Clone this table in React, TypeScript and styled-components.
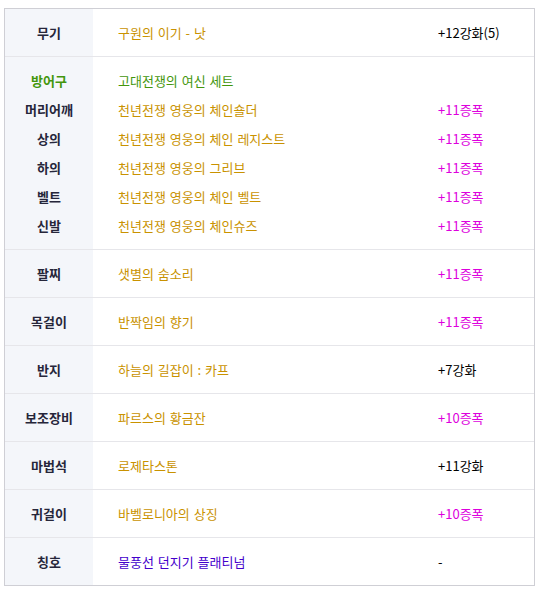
import React from "react";
import styled, { createGlobalStyle } from "styled-components";

const GlobalStyle = createGlobalStyle`
  body {
    margin: 8px 0 0 4px;
    background: #fff;
    font-family: "Noto Sans CJK KR", "Noto Sans", sans-serif;
    font-size: 13px;
  }
`;

const Table = styled.div`
  width: 529px;
  border: 1px solid #cfcfd5;
`;

const Section = styled.div`
  display: grid;
  grid-template-columns: 88px 345px 1fr;
  border-top: 1px solid #e6e6ea;
  &:first-child {
    border-top: none;
  }
`;

const LabelCol = styled.div<{ multi?: boolean }>`
  background: #f4f6fa;
  padding: ${({ multi }) => (multi ? "9px 0" : "0")};
`;

const Col = styled.div<{ multi?: boolean; indent?: number }>`
  padding: ${({ multi }) => (multi ? "9px 0" : "0")};
  padding-left: ${({ indent }) => indent ?? 0}px;
`;

const Line = styled.div<{ multi?: boolean }>`
  height: ${({ multi }) => (multi ? "29px" : "47px")};
  display: flex;
  align-items: center;
  white-space: nowrap;
`;

const Label = styled(Line)<{ color?: string }>`
  justify-content: center;
  font-weight: 700;
  color: ${({ color }) => color ?? "#26263a"};
`;

const Text = styled(Line)<{ color?: string }>`
  color: ${({ color }) => color ?? "#000"};
  word-spacing: 1px;
`;

const GOLD = "#c99200";
const GREEN = "#43960c";
const PINK = "#dd00dd";
const PURPLE = "#4400cc";

type Item = {
  label: string;
  labelColor?: string;
  name: string;
  nameColor: string;
  value: string;
  valueColor?: string;
};

const sections: Item[][] = [
  [{ label: "무기", name: "구원의 이기 - 낫", nameColor: GOLD, value: "+12강화(5)" }],
  [
    { label: "방어구", labelColor: GREEN, name: "고대전쟁의 여신 세트", nameColor: GREEN, value: "" },
    { label: "머리어깨", name: "천년전쟁 영웅의 체인숄더", nameColor: GOLD, value: "+11증폭", valueColor: PINK },
    { label: "상의", name: "천년전쟁 영웅의 체인 레지스트", nameColor: GOLD, value: "+11증폭", valueColor: PINK },
    { label: "하의", name: "천년전쟁 영웅의 그리브", nameColor: GOLD, value: "+11증폭", valueColor: PINK },
    { label: "벨트", name: "천년전쟁 영웅의 체인 벨트", nameColor: GOLD, value: "+11증폭", valueColor: PINK },
    { label: "신발", name: "천년전쟁 영웅의 체인슈즈", nameColor: GOLD, value: "+11증폭", valueColor: PINK },
  ],
  [{ label: "팔찌", name: "샛별의 숨소리", nameColor: GOLD, value: "+11증폭", valueColor: PINK }],
  [{ label: "목걸이", name: "반짝임의 향기", nameColor: GOLD, value: "+11증폭", valueColor: PINK }],
  [{ label: "반지", name: "하늘의 길잡이 : 카프", nameColor: GOLD, value: "+7강화" }],
  [{ label: "보조장비", name: "파르스의 황금잔", nameColor: GOLD, value: "+10증폭", valueColor: PINK }],
  [{ label: "마법석", name: "로제타스톤", nameColor: GOLD, value: "+11강화" }],
  [{ label: "귀걸이", name: "바벨로니아의 상징", nameColor: GOLD, value: "+10증폭", valueColor: PINK }],
  [{ label: "칭호", name: "물풍선 던지기 플래티넘", nameColor: PURPLE, value: "-" }],
];

export default function App() {
  return (
    <>
      <GlobalStyle />
      <Table>
        {sections.map((items, i) => {
          const multi = items.length > 1;
          return (
            <Section key={i}>
              <LabelCol multi={multi}>
                {items.map((it) => (
                  <Label key={it.label} multi={multi} color={it.labelColor}>
                    {it.label}
                  </Label>
                ))}
              </LabelCol>
              <Col multi={multi} indent={25}>
                {items.map((it) => (
                  <Text key={it.label} multi={multi} color={it.nameColor}>
                    {it.name}
                  </Text>
                ))}
              </Col>
              <Col multi={multi} indent={0}>
                {items.map((it) => (
                  <Text key={it.label} multi={multi} color={it.valueColor}>
                    {it.value}
                  </Text>
                ))}
              </Col>
            </Section>
          );
        })}
      </Table>
    </>
  );
}
